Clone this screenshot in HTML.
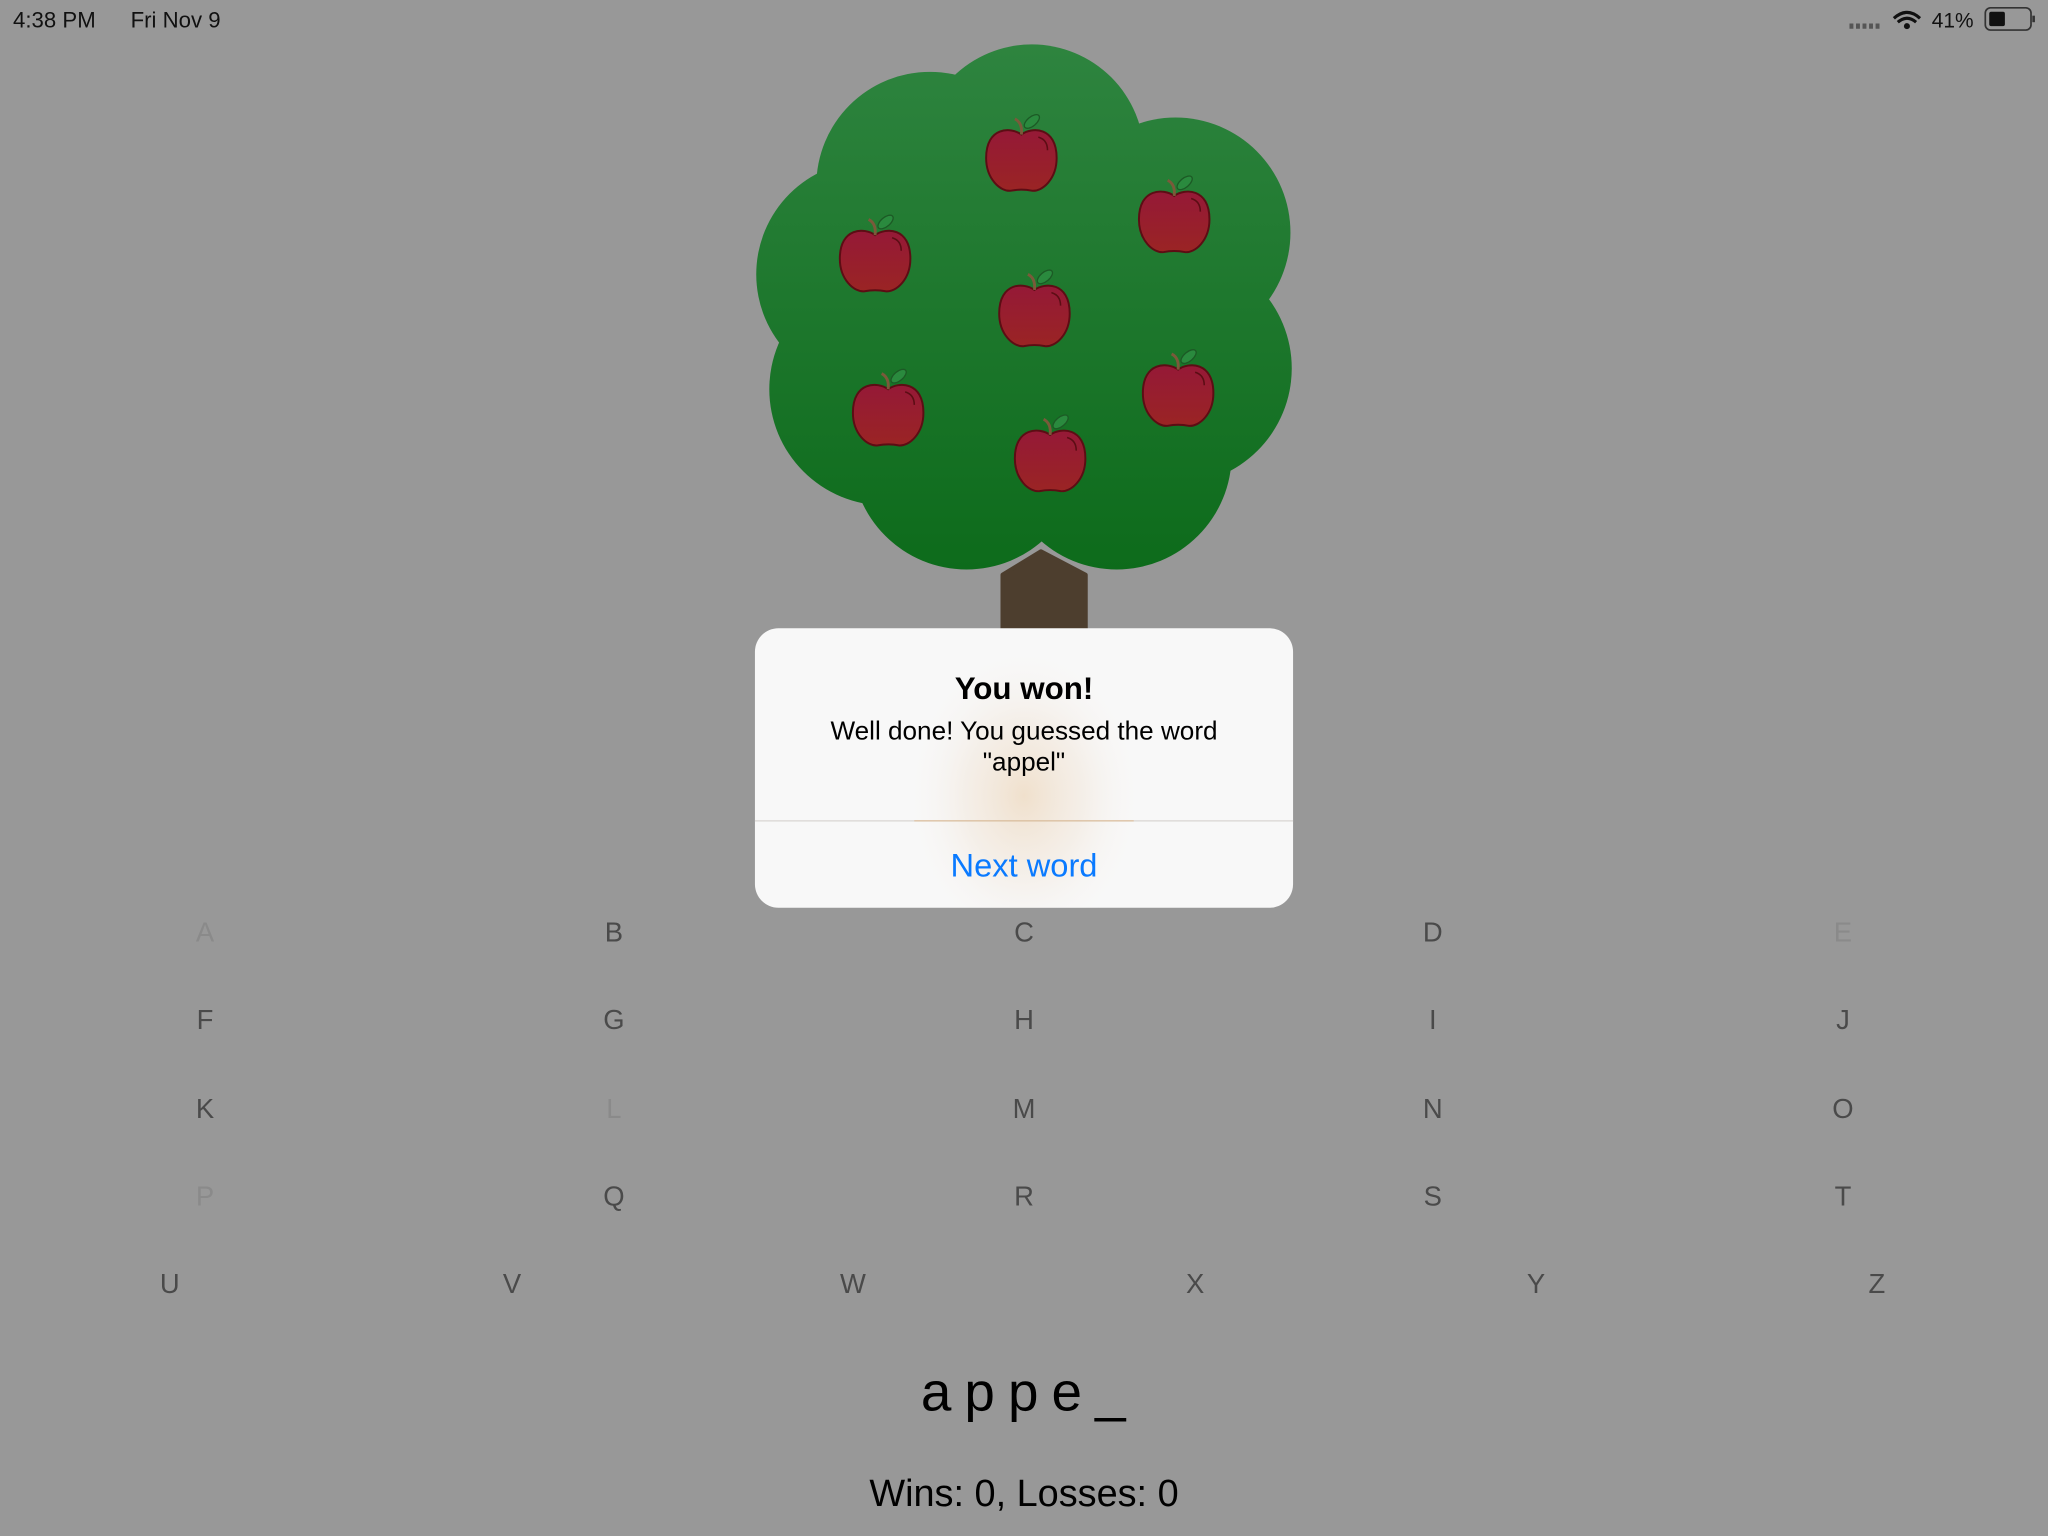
<!DOCTYPE html>
<html><head><meta charset="utf-8"><style>
html,body{margin:0;padding:0;background:#989898;overflow:hidden}
svg{display:block}
text{font-family:"Liberation Sans",sans-serif}
</style></head><body>
<svg width="2048" height="1536" viewBox="0 0 1568 1176" xmlns="http://www.w3.org/2000/svg">
<defs>
<linearGradient id="g" x1="0" y1="34" x2="0" y2="436" gradientUnits="userSpaceOnUse">
<stop offset="0" stop-color="#2e843f"/><stop offset="1" stop-color="#0d6b1b"/></linearGradient>
<linearGradient id="ag" x1="0" y1="0" x2="0" y2="1"><stop offset="0" stop-color="#951937"/><stop offset="1" stop-color="#9a2424"/></linearGradient>
<radialGradient id="glow" cx="0.5" cy="0.6" r="0.5" gradientTransform="translate(0.5,0.6) scale(0.45,1.1) translate(-0.5,-0.6)">
<stop offset="0" stop-color="#f0e0cc"/><stop offset="0.5" stop-color="#f3ebe2" stop-opacity="0.7"/><stop offset="1" stop-color="#f8f8f8" stop-opacity="0"/></radialGradient>
<g id="apple">
<path d="M0,-18 C-8,-24 -27,-24 -27,0 C-27,16 -16,26 -8,25 C-3,24 3,24 8,25 C16,26 27,16 27,0 C27,-24 8,-24 0,-18 Z" fill="url(#ag)" stroke="#5c0d14" stroke-width="1.5"/>
<path d="M13,-16 Q20,-14 20,-6" fill="none" stroke="#5c0d14" stroke-width="1.2"/>
<path d="M0,-18 Q1,-27 -5,-30" fill="none" stroke="#7a5a3a" stroke-width="2.2"/>
<ellipse cx="8" cy="-28" rx="7" ry="3.5" transform="rotate(-40 8 -28)" fill="#2a8a3e" stroke="#1c5a25" stroke-width="1"/>
</g>
</defs>
<rect width="1568" height="1176" fill="#989898"/>
<text x="10" y="21" font-size="17" fill="#111">4:38 PM</text>
<text x="100" y="21" font-size="17" fill="#111">Fri Nov 9</text>
<g fill="#555"><rect x="1416" y="18" width="3" height="4"/><rect x="1421" y="18" width="3" height="4"/><rect x="1426" y="18" width="3" height="4"/><rect x="1431" y="18" width="3" height="4"/><rect x="1436" y="18" width="3" height="4"/></g>
<path d="M1450,14 Q1460,5 1470,14 M1453,17 Q1460,11 1467,17" stroke="#111" stroke-width="2.4" fill="none"/>
<circle cx="1460" cy="20" r="2.3" fill="#111"/>
<text x="1479" y="21" font-size="16" fill="#111">41%</text>
<rect x="1520" y="6" width="35" height="17" rx="4" fill="none" stroke="#333" stroke-width="1.3"/>
<rect x="1523" y="9" width="12" height="11" rx="1.5" fill="#111"/>
<rect x="1556" y="12" width="2" height="5" fill="#333"/>
<path d="M767.5,440 L797,422 L831.3,440 L831.3,490 L767.5,490 Z" fill="#4d3e2e" stroke="#4d3e2e" stroke-width="3" stroke-linejoin="round"/>
<g fill="url(#g)">
<circle cx="790" cy="120" r="86"/><circle cx="712" cy="142" r="87"/><circle cx="666" cy="210" r="87"/><circle cx="678" cy="298" r="89"/>
<circle cx="740" cy="348" r="88"/><circle cx="855" cy="348" r="88"/><circle cx="900" cy="282" r="89"/><circle cx="900" cy="178" r="88"/>
<rect x="680" y="130" width="230" height="260"/>
</g>
<use href="#apple" x="782" y="121"/><use href="#apple" x="899" y="168"/><use href="#apple" x="670" y="198"/><use href="#apple" x="792" y="240"/>
<use href="#apple" x="680" y="316"/><use href="#apple" x="902" y="301"/><use href="#apple" x="804" y="351"/>
<rect x="578" y="481" width="412" height="214" rx="18" fill="#f8f8f8"/>
<rect x="578" y="481" width="412" height="214" rx="18" fill="url(#glow)"/>
<line x1="578" y1="628.5" x2="990" y2="628.5" stroke="#d9d6d2" stroke-width="1"/>
<line x1="700" y1="628.5" x2="868" y2="628.5" stroke="#d9a060" stroke-width="0.8" opacity="0.6"/>
<text x="784" y="535" font-size="24" font-weight="bold" text-anchor="middle" fill="#000">You won!</text>
<text x="784" y="566" font-size="20" text-anchor="middle" fill="#000">Well done! You guessed the word</text>
<text x="784" y="590" font-size="20" text-anchor="middle" fill="#000">"appel"</text>
<text x="784" y="671" font-size="25" text-anchor="middle" fill="#0a7aff">Next word</text>
<g font-size="21" text-anchor="middle" fill="#4a4a4a">
<text x="157" y="721" fill="#8a8a8a">A</text><text x="470" y="721">B</text><text x="784" y="721">C</text><text x="1097" y="721">D</text><text x="1411" y="721" fill="#8a8a8a">E</text>
<text x="157" y="788">F</text><text x="470" y="788">G</text><text x="784" y="788">H</text><text x="1097" y="788">I</text><text x="1411" y="788">J</text>
<text x="157" y="856">K</text><text x="470" y="856" fill="#8a8a8a">L</text><text x="784" y="856">M</text><text x="1097" y="856">N</text><text x="1411" y="856">O</text>
<text x="157" y="923" fill="#8a8a8a">P</text><text x="470" y="923">Q</text><text x="784" y="923">R</text><text x="1097" y="923">S</text><text x="1411" y="923">T</text>
<text x="130" y="990">U</text><text x="392" y="990">V</text><text x="653" y="990">W</text><text x="915" y="990">X</text><text x="1176" y="990">Y</text><text x="1437" y="990">Z</text>
</g>
<text x="705" y="1080" font-size="42" fill="#000" letter-spacing="10">appe_</text>
<text x="784" y="1153" font-size="29" text-anchor="middle" fill="#000">Wins: 0, Losses: 0</text>
</svg>
</body></html>
